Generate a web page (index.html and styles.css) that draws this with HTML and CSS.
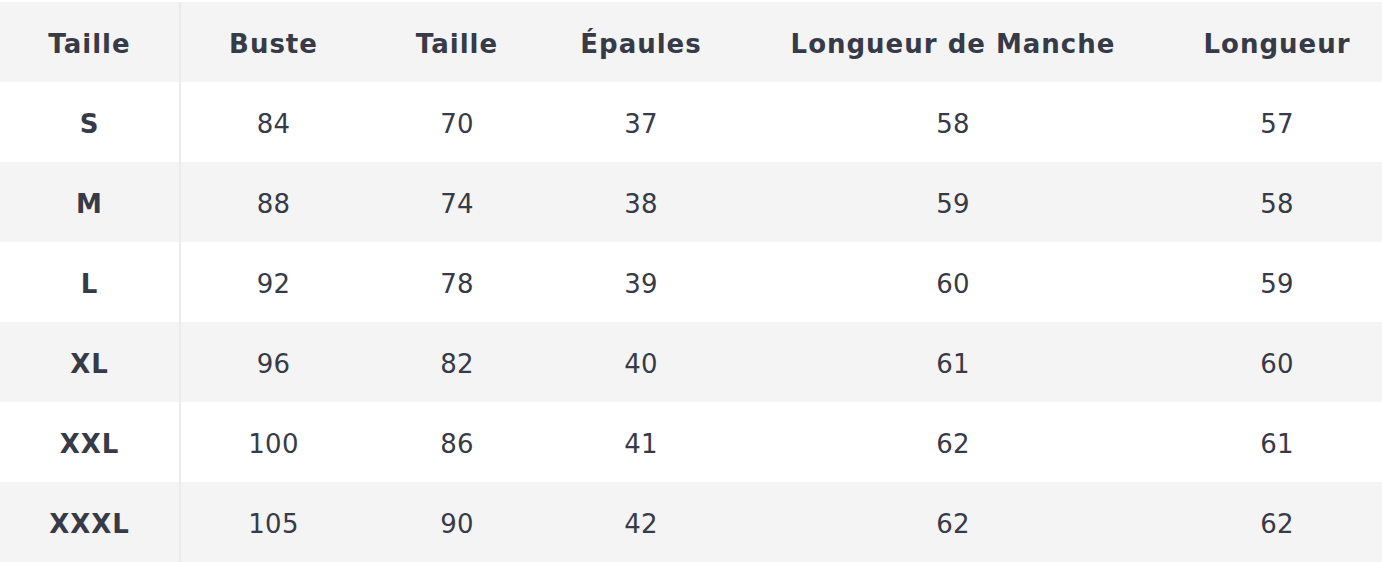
FILE: index.html
```html
<!DOCTYPE html>
<html lang="fr">
<head>
<meta charset="utf-8">
<link rel="stylesheet" href="styles.css">
</head>
<body>
<table class="size-table">
  <colgroup>
    <col class="c1"><col class="c2"><col class="c3"><col class="c4"><col class="c5"><col class="c6">
  </colgroup>
  <thead>
    <tr><th>Taille</th><th>Buste</th><th>Taille</th><th>Épaules</th><th>Longueur de Manche</th><th>Longueur</th></tr>
  </thead>
  <tbody>
    <tr><th>S</th><td>84</td><td>70</td><td>37</td><td>58</td><td>57</td></tr>
    <tr><th>M</th><td>88</td><td>74</td><td>38</td><td>59</td><td>58</td></tr>
    <tr><th>L</th><td>92</td><td>78</td><td>39</td><td>60</td><td>59</td></tr>
    <tr><th>XL</th><td>96</td><td>82</td><td>40</td><td>61</td><td>60</td></tr>
    <tr><th>XXL</th><td>100</td><td>86</td><td>41</td><td>62</td><td>61</td></tr>
    <tr><th>XXXL</th><td>105</td><td>90</td><td>42</td><td>62</td><td>62</td></tr>
  </tbody>
</table>
</body>
</html>
```
FILE: styles.css
```css
html, body {
  margin: 0;
  padding: 0;
  background: #ffffff;
}
body {
  padding-top: 2px;
  font-family: "DejaVu Sans", Verdana, sans-serif;
  color: #373a47;
}
.size-table {
  width: 1382px;
  border-collapse: collapse;
  table-layout: fixed;
}
.c1 { width: 180px; }
.c2 { width: 186px; }
.c3 { width: 182px; }
.c4 { width: 186px; }
.c5 { width: 438px; }
.c6 { width: 210px; }
.size-table th,
.size-table td {
  height: 76px;
  padding: 4px 0 0;
  text-align: center;
  vertical-align: middle;
  font-size: 26px;
  line-height: 30px;
}
.size-table th {
  font-weight: bold;
  letter-spacing: 1px;
}
.size-table td {
  font-weight: normal;
  letter-spacing: 0.3px;
}
.size-table thead tr { background: #f4f4f4; }
.size-table tbody tr:nth-child(even) { background: #f4f4f4; }
.size-table tr > :first-child {
  border-right: 2px solid #ebebeb;
}
```
